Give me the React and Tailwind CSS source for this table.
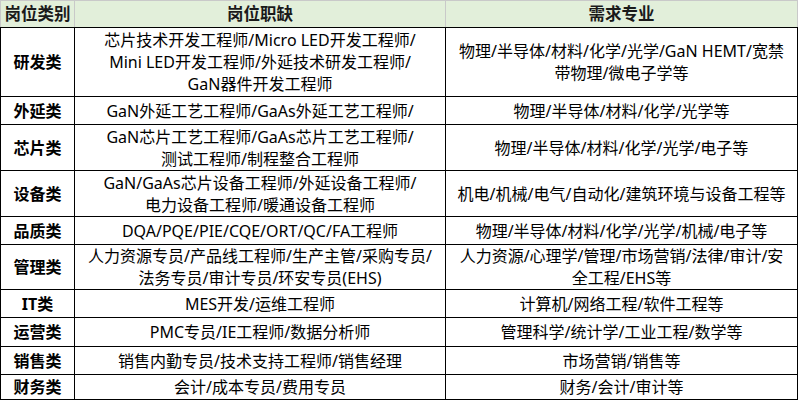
import React from "react";

const rows = [
  { cat: "研发类", h: 69, jobs: ["芯片技术开发工程师/Micro LED开发工程师/", "Mini LED开发工程师/外延技术研发工程师/", "GaN器件开发工程师"], majors: ["物理/半导体/材料/化学/光学/GaN HEMT/宽禁", "带物理/微电子学等"] },
  { cat: "外延类", h: 28, jobs: ["GaN外延工艺工程师/GaAs外延工艺工程师/"], majors: ["物理/半导体/材料/化学/光学等"] },
  { cat: "芯片类", h: 46, jobs: ["GaN芯片工艺工程师/GaAs芯片工艺工程师/", "测试工程师/制程整合工程师"], majors: ["物理/半导体/材料/化学/光学/电子等"] },
  { cat: "设备类", h: 46, jobs: ["GaN/GaAs芯片设备工程师/外延设备工程师/", "电力设备工程师/暖通设备工程师"], majors: ["机电/机械/电气/自动化/建筑环境与设备工程等"] },
  { cat: "品质类", h: 28, jobs: ["DQA/PQE/PIE/CQE/ORT/QC/FA工程师"], majors: ["物理/半导体/材料/化学/光学/机械/电子等"] },
  { cat: "管理类", h: 45, jobs: ["人力资源专员/产品线工程师/生产主管/采购专员/", "法务专员/审计专员/环安专员(EHS)"], majors: ["人力资源/心理学/管理/市场营销/法律/审计/安", "全工程/EHS等"] },
  { cat: "IT类", h: 28, jobs: ["MES开发/运维工程师"], majors: ["计算机/网络工程/软件工程等"] },
  { cat: "运营类", h: 29, jobs: ["PMC专员/IE工程师/数据分析师"], majors: ["管理科学/统计学/工业工程/数学等"] },
  { cat: "销售类", h: 28, jobs: ["销售内勤专员/技术支持工程师/销售经理"], majors: ["市场营销/销售等"] },
  { cat: "财务类", h: 25, jobs: ["会计/成本专员/费用专员"], majors: ["财务/会计/审计等"] },
];

const Lines = ({ lines }) => (
  <>
    {lines.map((l, i) => (
      <div key={i} className="whitespace-nowrap">{l}</div>
    ))}
  </>
);

export default function App() {
  return (
    <div className="w-[798px] h-[404px] bg-white text-black font-['Noto_Sans','Noto_Sans_CJK_SC',sans-serif]">
      <table className="w-[797px] table-fixed border-collapse text-[16px] leading-[22px]">
        <colgroup>
          <col className="w-[74px]" />
          <col className="w-[371px]" />
          <col className="w-[352px]" />
        </colgroup>
        <thead>
          <tr className="h-[27px] bg-[#e2efda] font-bold text-[#1a1a1a]">
            <th className="border border-[#c9c9c9] border-b-black p-0 text-center text-[16.5px]">岗位类别</th>
            <th className="border border-[#c9c9c9] border-b-black p-0 text-center text-[16.5px]">岗位职缺</th>
            <th className="border border-[#c9c9c9] border-b-black p-0 text-center text-[16.5px]">需求专业</th>
          </tr>
        </thead>
        <tbody>
          {rows.map((r) => (
            <tr key={r.cat} style={{ height: r.h }}>
              <td className="border border-black p-0 text-center font-bold">{r.cat}</td>
              <td className="border border-black p-0 text-center"><Lines lines={r.jobs} /></td>
              <td className="border border-black p-0 text-center"><Lines lines={r.majors} /></td>
            </tr>
          ))}
        </tbody>
      </table>
    </div>
  );
}
